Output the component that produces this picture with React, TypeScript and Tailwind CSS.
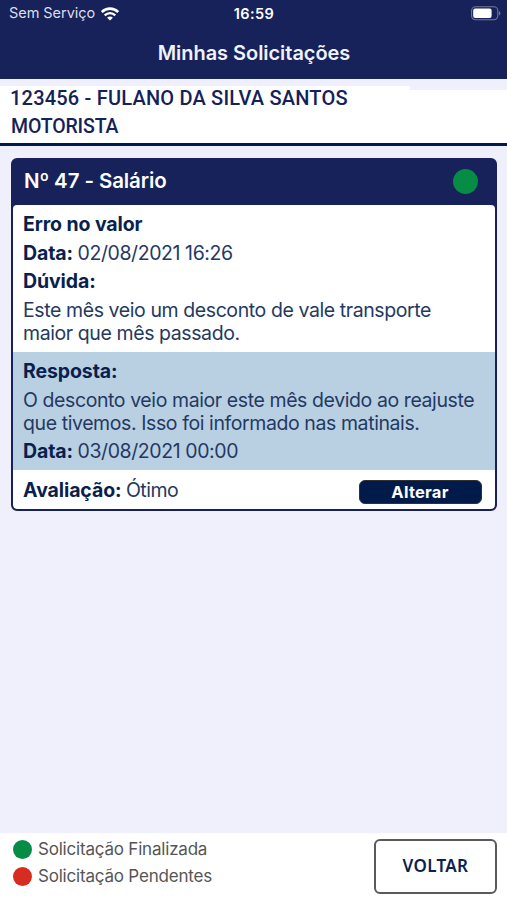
import type { ReactNode } from "react";

type Solicitacao = {
  numero: number;
  tipo: string;
  motivo: string;
  data: string;
  duvida: string;
  resposta: string;
  dataResposta: string;
  avaliacao: string;
};

const solicitacao: Solicitacao = {
  numero: 47,
  tipo: "Salário",
  motivo: "Erro no valor",
  data: "02/08/2021 16:26",
  duvida: "Este mês veio um desconto de vale transporte maior que mês passado.",
  resposta:
    "O desconto veio maior este mês devido ao reajuste que tivemos. Isso foi informado nas matinais.",
  dataResposta: "03/08/2021 00:00",
  avaliacao: "Ótimo",
};

function WifiIcon() {
  return (
    <svg width="18" height="14" viewBox="0 0 18 14" fill="none" stroke="white">
      <path d="M0.8 5.1C5.4 0.5 12.6 0.5 17.2 5.1" strokeWidth="2.6" />
      <path d="M3.7 8.3C6.7 5.4 11.3 5.4 14.3 8.3" strokeWidth="2.4" />
      <path
        d="M6.1 10.7C7.8 9.1 10.2 9.1 11.9 10.7L9 13.6Z"
        fill="white"
        stroke="none"
      />
    </svg>
  );
}

function BatteryIcon() {
  return (
    <svg width="31" height="15" viewBox="0 0 31 15" fill="none">
      <rect
        x="0.6"
        y="0.7"
        width="26.2"
        height="13"
        rx="4"
        stroke="#737997"
        strokeWidth="1.1"
      />
      <rect x="2.2" y="2.5" width="18.4" height="9.4" rx="2" fill="white" />
      <path d="M28 5V9.6C29.9 8.8 29.9 5.8 28 5Z" fill="#737997" />
    </svg>
  );
}

function StatusBar() {
  return (
    <div className="grid h-[27px] grid-cols-3 items-center pl-[9px] pr-[5px]">
      <div className="flex items-center gap-[6px]">
        <span className="whitespace-nowrap text-[14.5px] leading-none tracking-[-0.05px] text-[#dcddec]">
          Sem Serviço
        </span>
        <WifiIcon />
      </div>
      <span className="pr-[3px] pt-px text-center text-[14.5px] font-semibold leading-none tracking-[0.4px]">
        16:59
      </span>
      <div className="flex justify-end">
        <BatteryIcon />
      </div>
    </div>
  );
}

function Campo({ label, children }: { label: string; children?: ReactNode }) {
  return (
    <p>
      <b className="font-bold tracking-[-0.1px] text-[#0a1f4d]">{label} </b>
      {children}
    </p>
  );
}

function Card({ item }: { item: Solicitacao }) {
  return (
    <section className="mx-[10.5px] mt-3 flex h-[353px] flex-col overflow-hidden rounded-md border-[2.5px] border-[#162259] bg-[#162259]">
      <header className="flex h-[45px] shrink-0 items-center justify-between pb-[3px] pl-[11.5px] pr-[17px]">
        <h2 className="text-[20.5px] font-semibold tracking-[-0.1px] text-white">
          Nº {item.numero} - {item.tipo}
        </h2>
        <span className="size-[25px] rounded-full bg-[#068c45]" />
      </header>
      <div className="flex flex-1 flex-col rounded bg-white text-[19.5px] leading-[23px] tracking-[-0.41px] text-[#243962]">
        <div className="flex h-[147px] flex-col gap-[5.5px] pl-[10.5px] pr-3 pt-[8px]">
          <Campo label={item.motivo} />
          <Campo label="Data:">{item.data}</Campo>
          <Campo label="Dúvida:" />
          <p>{item.duvida}</p>
        </div>
        <div className="flex h-[118px] flex-col gap-[5.5px] bg-[#b9d0e2] pl-[10.5px] pr-3 pt-[8px]">
          <Campo label="Resposta:" />
          <p>{item.resposta}</p>
          <Campo label="Data:">{item.dataResposta}</Campo>
        </div>
        <div className="flex flex-1 items-start justify-between pl-[10.5px] pr-[13px] pt-[9px]">
          <Campo label="Avaliação:">
            <span className="tracking-[-0.5px]">{item.avaliacao}</span>
          </Campo>
          <button className="mt-px h-6 w-[123px] rounded-md border border-[#303038] bg-[#001b4a] text-[16.5px] font-bold leading-none tracking-[0.25px] text-white">
            Alterar
          </button>
        </div>
      </div>
    </section>
  );
}

function Legenda() {
  return (
    <ul className="flex flex-col gap-[5px] text-[17px] leading-[22px] tracking-[-0.2px] text-[#555]">
      <li className="flex items-center gap-[6px]">
        <span className="size-[19px] rounded-full bg-[#068c45]" />
        Solicitação Finalizada
      </li>
      <li className="flex items-center gap-[6px]">
        <span className="size-[19px] rounded-full bg-[#d72c20]" />
        Solicitação Pendentes
      </li>
    </ul>
  );
}

export default function App() {
  return (
    <main className="flex h-[900px] w-[507px] flex-col overflow-hidden bg-[#f0f0fc] font-['Inter',sans-serif]">
      <header className="h-[79px] shrink-0 bg-[#162259] text-white">
        <StatusBar />
        <h1 className="mt-[12px] pl-px text-center text-[20px] font-semibold leading-[28px] tracking-[-0.05px] text-[#f0f1fa]">
          Minhas Solicitações
        </h1>
      </header>
      <div className="flex h-[67px] shrink-0 flex-col border-b-[3px] border-[#001c4d] bg-white font-['Roboto',sans-serif] text-[20px] font-medium text-[#14225a]">
        <div className="flex h-[11px] shrink-0 flex-col items-end bg-[#f0f0fc]">
          <div className="mt-auto h-1 w-full bg-white pl-[410px]">
            <div className="h-full bg-[#f0f0fc]" />
          </div>
        </div>
        <p className="-mt-[6px] pl-[10px] leading-[28px] tracking-[0.2px]">
          123456 - FULANO DA SILVA SANTOS
        </p>
        <p className="pl-[11px] pt-px text-[19.5px] leading-[28px] tracking-[-0.15px]">
          MOTORISTA
        </p>
      </div>
      <Card item={solicitacao} />
      <footer className="mt-auto flex h-[67px] shrink-0 items-start justify-between bg-white pl-[13px] pr-[10px] pt-[5px]">
        <Legenda />
        <button className="mt-px h-[55px] w-[123px] rounded-md border-2 border-[#5a5a5e] pb-px font-['Noto_Sans',sans-serif] text-[17px] font-semibold tracking-[0.35px] text-[#0b2250]">
          VOLTAR
        </button>
      </footer>
    </main>
  );
}
